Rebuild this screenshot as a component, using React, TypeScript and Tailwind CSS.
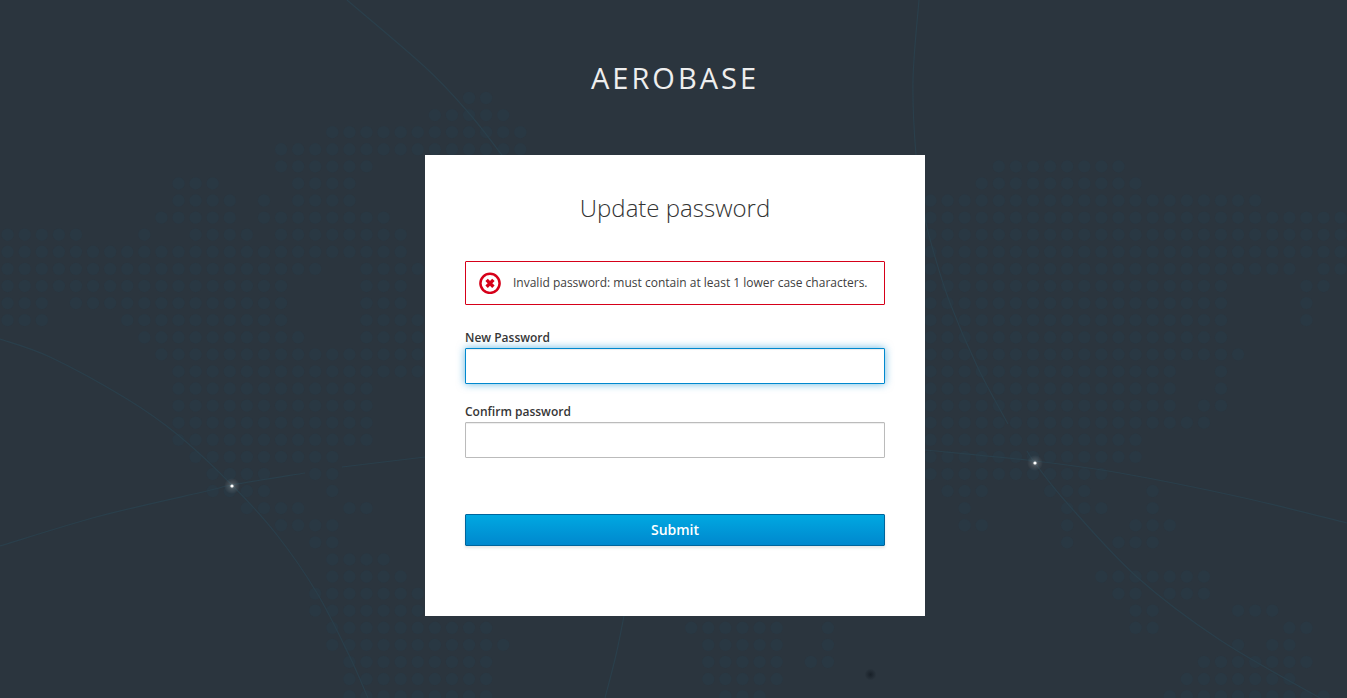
type Point = [number, number];

// Each entry lists the inclusive column ranges that carry a dot on that row of the world map.
const DOT_ROWS: Point[][] = [
  [[27, 28]],
  [[25, 29]],
  [[19, 30]],
  [[16, 30]],
  [[16, 21], [58, 65]],
  [[10, 12], [17, 20], [57, 66]],
  [[10, 13], [15, 15], [17, 20], [54, 73]],
  [[9, 13], [15, 22], [54, 78]],
  [[0, 4], [8, 8], [11, 14], [16, 23], [54, 78]],
  [[0, 23], [54, 78]],
  [[0, 18], [21, 24], [54, 75], [77, 78]],
  [[0, 16], [21, 23], [54, 71], [76, 77]],
  [[0, 2], [4, 16], [21, 23], [54, 71], [76, 76]],
  [[0, 2], [7, 16], [21, 24], [54, 71], [76, 76]],
  [[8, 17], [21, 24], [54, 71]],
  [[9, 24], [54, 72]],
  [[10, 24], [54, 68], [71, 71]],
  [[10, 21], [54, 68], [71, 71]],
  [[10, 21], [54, 68], [70, 71]],
  [[10, 21], [54, 70]],
  [[10, 21], [54, 66]],
  [[11, 19], [54, 66]],
  [[12, 15], [18, 19], [54, 64]],
  [[12, 15], [19, 19], [55, 57], [61, 63], [67, 67]],
  [[14, 17], [20, 21], [56, 56], [62, 64], [67, 67]],
  [[16, 19], [56, 57], [62, 62], [66, 68]],
  [[18, 19], [62, 62], [65, 67]],
  [[19, 22]],
  [[19, 23], [64, 70]],
  [[18, 24], [65, 66], [68, 70]],
  [[18, 24], [66, 67], [72, 74]],
  [[19, 28], [40, 45], [48, 48], [66, 67], [75, 76]],
  [[19, 29], [41, 45], [48, 48], [72, 72], [74, 75]],
  [[20, 28], [41, 45], [47, 48], [70, 76]],
  [[20, 28], [41, 45], [69, 75]],
  [[20, 28], [42, 44], [68, 77]],
];

const ROUTES: Point[][] = [
  [[0, 339], [50, 357], [127, 399], [178, 435], [232, 485], [277, 535], [317, 593], [349, 655], [368, 698]],
  [[0, 546], [100, 516], [207, 491], [232, 485], [305, 473]],
  [[342, 467], [425, 457]],
  [[347, 0], [425, 67], [468, 112], [502, 155]],
  [[919, 0], [913, 80], [916, 155], [924, 213], [933, 250], [950, 303], [978, 368], [1008, 424]],
  [[1027, 451], [1035, 463], [1067, 503], [1137, 577], [1220, 640], [1320, 698]],
  [[925, 450], [1035, 461], [1120, 473], [1240, 497], [1347, 523]],
  [[624, 616], [616, 655], [605, 698]],
];

const STARS: Point[] = [[232, 486], [1035, 463]];

function smoothPath(points: Point[]): string {
  let d = `M${points[0][0]} ${points[0][1]}`;
  for (let i = 0; i < points.length - 1; i++) {
    const before = points[Math.max(i - 1, 0)];
    const from = points[i];
    const to = points[i + 1];
    const after = points[Math.min(i + 2, points.length - 1)];
    d += ` C${from[0] + (to[0] - before[0]) / 6} ${from[1] + (to[1] - before[1]) / 6}`;
    d += ` ${to[0] - (after[0] - from[0]) / 6} ${to[1] - (after[1] - from[1]) / 6} ${to[0]} ${to[1]}`;
  }
  return d;
}

function WorldMap() {
  return (
    <svg
      aria-hidden="true"
      className="absolute inset-0 h-full w-full"
      viewBox="0 0 1347 698"
      preserveAspectRatio="xMidYMid slice"
    >
      <defs>
        <radialGradient id="glow">
          <stop offset="0" stopColor="#ffffff" stopOpacity="0.35" />
          <stop offset="0.4" stopColor="#ffffff" stopOpacity="0.12" />
          <stop offset="1" stopColor="#ffffff" stopOpacity="0" />
        </radialGradient>
        <radialGradient id="shade">
          <stop offset="0" stopColor="#161e26" stopOpacity="0.9" />
          <stop offset="1" stopColor="#161e26" stopOpacity="0" />
        </radialGradient>
      </defs>
      <g fill="#293843">
        {DOT_ROWS.flatMap((ranges, row) =>
          ranges.flatMap(([start, end]) =>
            Array.from({ length: end - start + 1 }, (_, i) => (
              <circle key={`${row}-${start + i}`} cx={7.6 + (start + i) * 17.09} cy={98 + row * 17.09} r="6.2" />
            )),
          ),
        )}
      </g>
      <g fill="none" stroke="#2a3f4b" strokeWidth="1.2">
        {ROUTES.map((points, i) => (
          <path key={i} d={smoothPath(points)} />
        ))}
      </g>
      {STARS.map(([x, y]) => (
        <g key={x}>
          <circle cx={x} cy={y} r="8" fill="url(#glow)" />
          <circle cx={x} cy={y} r="1.6" fill="#ffffff" />
        </g>
      ))}
      <circle cx="870.5" cy="674.5" r="6" fill="url(#shade)" />
    </svg>
  );
}

function ErrorIcon() {
  return (
    <svg aria-hidden="true" className="size-[22px] shrink-0" viewBox="0 0 22 22" fill="none" stroke="#d60019">
      <circle cx="11" cy="11.3" r="9.6" strokeWidth="2.5" />
      <path d="M7.6 7.9l6.8 6.8M14.4 7.9l-6.8 6.8" strokeWidth="3.4" />
    </svg>
  );
}

const fieldClass =
  "h-9 w-full rounded-[1px] border border-[#bbb] bg-white px-2 text-sm text-[#333] shadow-[inset_0_1px_1px_rgba(3,3,3,0.075)] outline-none focus:border-[#0088ce] focus:shadow-[inset_0_1px_1px_rgba(3,3,3,0.075),0_0_8px_rgba(0,136,206,0.6)]";

export default function App() {
  return (
    <div className="relative min-h-screen bg-[#2b353e] pl-[3px] font-['Open_Sans',sans-serif]">
      <WorldMap />
      <div className="relative flex flex-col items-center">
        <header className="pt-[58px] pb-[57px] text-[29px] leading-10 tracking-[3px] text-[#eee] uppercase">
          Aerobase
        </header>
        <main className="w-full max-w-[500px] bg-white px-10 pt-[37px] pb-[70px]">
          <h1 className="text-center text-2xl leading-8 font-light text-[#333]">Update password</h1>
          <div
            role="alert"
            className="mt-[37px] flex h-11 items-center gap-3 rounded-[1px] border border-[#d60019] px-[13px] text-xs text-[#404040]"
          >
            <ErrorIcon />
            <p>Invalid password: must contain at least 1 lower case characters.</p>
          </div>
          <form className="mt-[25px] text-xs text-[#363636]" onSubmit={(event) => event.preventDefault()}>
            <label htmlFor="password-new" className="block pb-0.5 leading-4 font-semibold">
              New Password
            </label>
            <input id="password-new" type="password" autoFocus className={`${fieldClass} caret-transparent`} />
            <label htmlFor="password-confirm" className="mt-5 block pb-0.5 leading-4 font-semibold">
              Confirm password
            </label>
            <input id="password-confirm" type="password" className={fieldClass} />
            <button
              type="submit"
              className="mt-14 block h-8 w-full rounded-[1px] border border-[#00659c] bg-linear-to-b from-[#00a8e1] to-[#0088ce] text-sm leading-none font-semibold text-white shadow-[0_2px_3px_rgba(3,3,3,0.1)]"
            >
              Submit
            </button>
          </form>
        </main>
      </div>
    </div>
  );
}
